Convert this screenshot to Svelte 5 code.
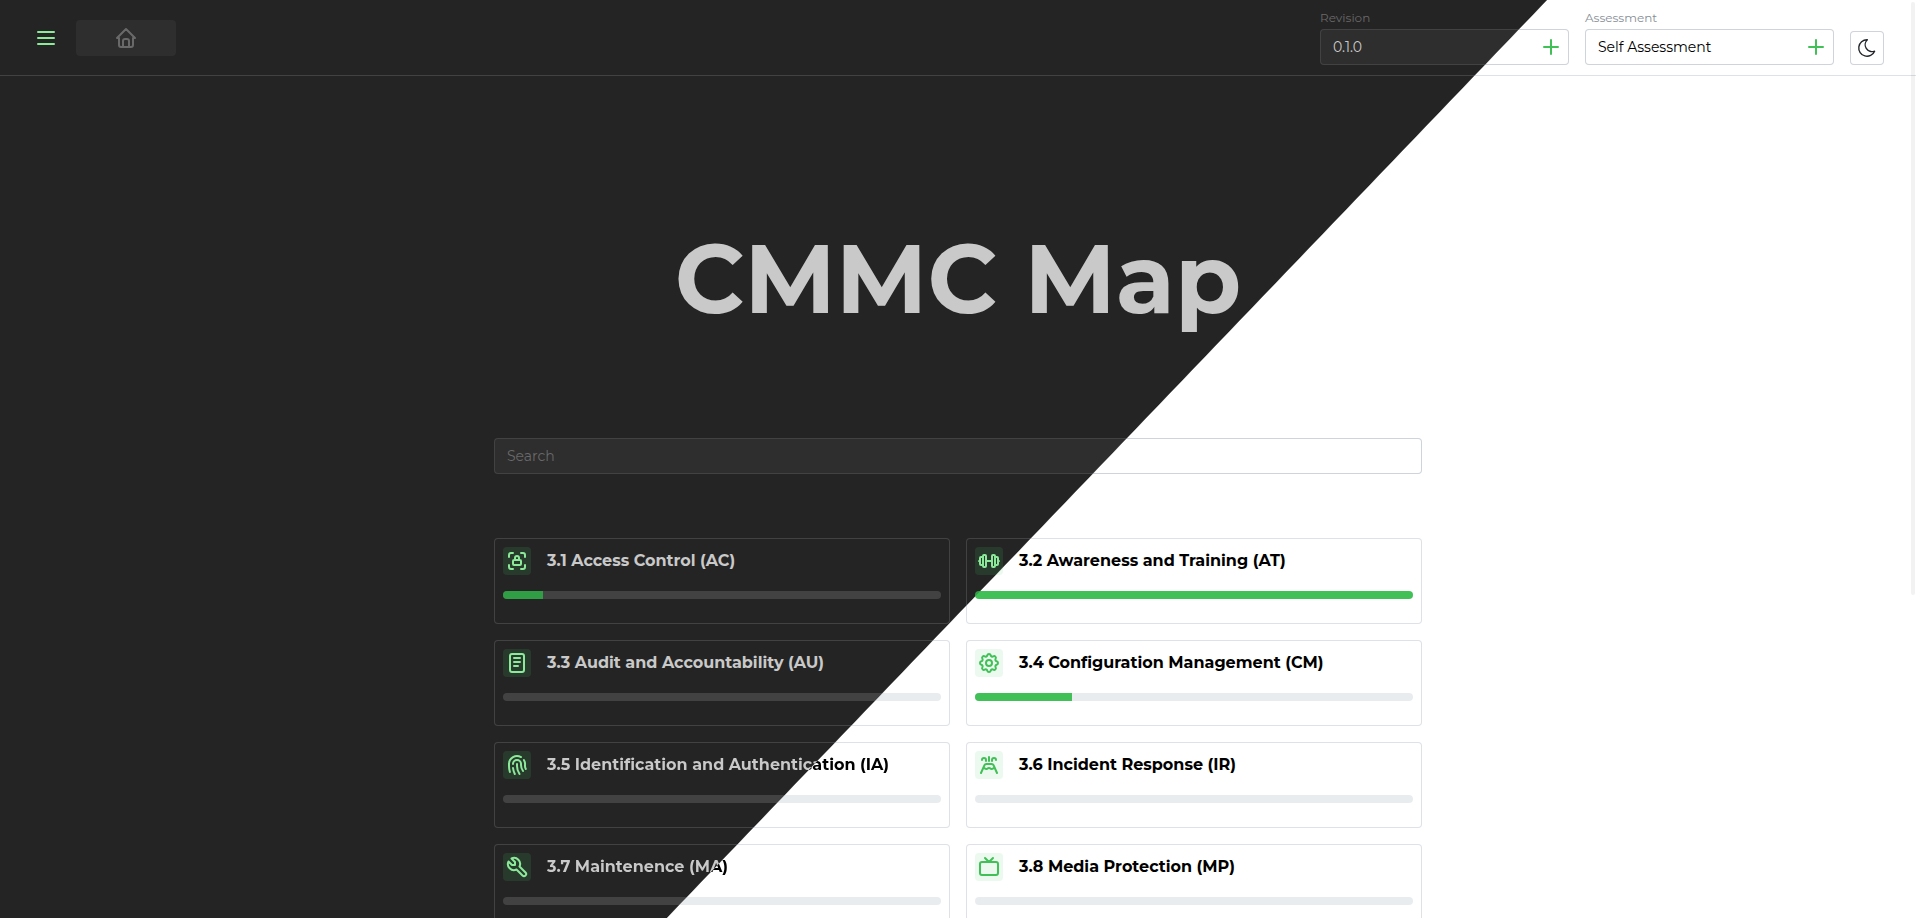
<script>
  const families = [
    {
      title: '3.1 Access Control (AC)', tone: 'dark', iconTone: 'dark', progress: 9.1,
      icon: 'M4 8v-2a2 2 0 0 1 2 -2h2M4 16v2a2 2 0 0 0 2 2h2M16 4h2a2 2 0 0 1 2 2v2M16 20h2a2 2 0 0 0 2 -2v-2M9 11h6a1 1 0 0 1 1 1v3a1 1 0 0 1 -1 1h-6a1 1 0 0 1 -1 -1v-3a1 1 0 0 1 1 -1zM10 11v-2a2 2 0 1 1 4 0v2'
    },
    {
      title: '3.2 Awareness and Training (AT)', tone: 'light', iconTone: 'dark', progress: 100,
      icon: 'M2 12h1M6 8h-2a1 1 0 0 0 -1 1v6a1 1 0 0 0 1 1h2M6 7v10a1 1 0 0 0 1 1h1a1 1 0 0 0 1 -1v-10a1 1 0 0 0 -1 -1h-1a1 1 0 0 0 -1 1zM9 12h6M15 7v10a1 1 0 0 0 1 1h1a1 1 0 0 0 1 -1v-10a1 1 0 0 0 -1 -1h-1a1 1 0 0 0 -1 1zM18 8h2a1 1 0 0 1 1 1v6a1 1 0 0 1 -1 1h-2M22 12h-1'
    },
    {
      title: '3.3 Audit and Accountability (AU)', tone: 'dark', iconTone: 'dark', progress: 0,
      icon: 'M7 3h10a2 2 0 0 1 2 2v14a2 2 0 0 1 -2 2h-10a2 2 0 0 1 -2 -2v-14a2 2 0 0 1 2 -2zM9 7h6M9 11h6M9 15h4'
    },
    {
      title: '3.4 Configuration Management (CM)', tone: 'light', iconTone: 'light', progress: 22.2,
      icon: 'M10.325 4.317c.426 -1.756 2.924 -1.756 3.35 0a1.724 1.724 0 0 0 2.573 1.066c1.543 -.94 3.31 .826 2.37 2.37a1.724 1.724 0 0 0 1.065 2.572c1.756 .426 1.756 2.924 0 3.35a1.724 1.724 0 0 0 -1.066 2.573c.94 1.543 -.826 3.31 -2.37 2.37a1.724 1.724 0 0 0 -2.572 1.065c-.426 1.756 -2.924 1.756 -3.35 0a1.724 1.724 0 0 0 -2.573 -1.066c-1.543 .94 -3.31 -.826 -2.37 -2.37a1.724 1.724 0 0 0 -1.065 -2.572c-1.756 -.426 -1.756 -2.924 0 -3.35a1.724 1.724 0 0 0 1.066 -2.573c-.94 -1.543 .826 -3.31 2.37 -2.37c1 .608 2.296 .07 2.572 -1.065zM9 12a3 3 0 1 0 6 0a3 3 0 0 0 -6 0'
    },
    {
      title: '3.5 Identification and Authentication (IA)', tone: 'split', iconTone: 'dark', progress: 0,
      icon: 'M18.9 7a8 8 0 0 1 1.1 5v1a6 6 0 0 0 .8 3M8 11a4 4 0 0 1 8 0v1a10 10 0 0 0 2 6M12 11v2a14 14 0 0 0 2.5 8M8 15a18 18 0 0 0 1.8 6M4.9 19a22 22 0 0 1 -.9 -7v-1a8 8 0 0 1 12 -6.95'
    },
    {
      title: '3.6 Incident Response (IR)', tone: 'light', iconTone: 'light', progress: 0,
      icon: 'M9 8v-1a2 2 0 1 0 -4 0M15 8v-1a2 2 0 1 1 4 0M4 20l3.472 -7.812a2 2 0 0 1 1.828 -1.188h5.4a2 2 0 0 1 1.828 1.188l3.472 7.812M6.192 15.064a2.14 2.14 0 0 1 .475 -.064c.527 -.009 1.026 .178 1.333 .5c.307 .32 .806 .507 1.333 .5c.527 .007 1.026 -.18 1.334 -.5c.307 -.322 .806 -.509 1.333 -.5c.527 -.009 1.026 .178 1.333 .5c.308 .32 .807 .507 1.334 .5c.527 .007 1.026 -.18 1.333 -.5c.307 -.322 .806 -.509 1.333 -.5c.161 .003 .32 .025 .472 .064M12 8v-4'
    },
    {
      title: '3.7 Maintenence (MA)', tone: 'split', iconTone: 'dark', progress: 0,
      icon: 'M7 10h3v-3l-3.5 -3.5a6 6 0 0 1 8 8l6 6a2 2 0 0 1 -3 3l-6 -6a6 6 0 0 1 -8 -8l3.5 3.5'
    },
    {
      title: '3.8 Media Protection (MP)', tone: 'light', iconTone: 'light', progress: 0,
      icon: 'M5 7h14a2 2 0 0 1 2 2v9a2 2 0 0 1 -2 2h-14a2 2 0 0 1 -2 -2v-9a2 2 0 0 1 2 -2zM16 3l-4 4l-4 -4'
    }
  ];

  const fields = [
    { id: 'revision', label: 'Revision', value: '0.1.0', tone: 'dark' },
    { id: 'assessment', label: 'Assessment', value: 'Self Assessment', tone: 'light' }
  ];
</script>

<div class="shell split">
  <header class="topbar">
    <div class="nav">
      <button class="burger" type="button" aria-label="Menu">
        <span></span><span></span><span></span>
      </button>
      <button class="home" type="button" aria-label="Home">
        <svg class="icon" viewBox="0 0 24 24" stroke-width="2">
          <path d="M5 12l-2 0l9 -9l9 9l-2 0M5 12v7a2 2 0 0 0 2 2h10a2 2 0 0 0 2 -2v-7M9 21v-6a2 2 0 0 1 2 -2h2a2 2 0 0 1 2 2v6" />
        </svg>
      </button>
    </div>

    <div class="tools">
      {#each fields as field}
        <div class="field {field.tone}">
          <label for={field.id}>{field.label}</label>
          <div class="control outlined">
            <input id={field.id} type="text" value={field.value} />
            <button class="add" type="button" aria-label="Add {field.label}">
              <svg class="icon" viewBox="0 0 24 24" stroke-width="2"><path d="M12 5v14M5 12h14" /></svg>
            </button>
          </div>
        </div>
      {/each}
      <button class="theme outlined" type="button" aria-label="Toggle theme">
        <svg class="icon moon" viewBox="0 0 24 24" stroke-width="1.5">
          <path d="M12 3c.132 0 .263 0 .393 0a7.5 7.5 0 0 0 7.92 12.446a9 9 0 1 1 -8.313 -12.454z" />
        </svg>
      </button>
    </div>
  </header>
  <div class="rule split"></div>

  <main>
    <h1>CMMC Map</h1>
    <input class="search outlined" type="search" placeholder="Search" aria-label="Search" />
    <div class="cards">
      {#each families as family}
        <a class="card outlined" href="#families">
          <div class="heading">
            <span class="badge split {family.iconTone}">
              <svg class="icon" viewBox="0 0 24 24" stroke-width="2"><path d={family.icon} /></svg>
            </span>
            <h2 class={family.tone}>{family.title}</h2>
          </div>
          <div class="track split" role="progressbar" aria-label={family.title} aria-valuenow={family.progress} aria-valuemin="0" aria-valuemax="100">
            <div class="fill split" style="width: {family.progress}%"></div>
          </div>
        </a>
      {/each}
    </div>
  </main>
  <div class="thumb"></div>
</div>

<style>
  :global(body) {
    margin: 0;
  }

  * {
    box-sizing: border-box;
  }

  /* Both themes share one diagonal edge, anchored to the window. */
  .split {
    background-image: linear-gradient(133.8deg, var(--dark) calc(50% + 107px), var(--light) calc(50% + 108px));
    background-attachment: fixed;
  }

  .outlined {
    --fill-dark: #2e2e2e;
    --line-dark: #424242;
    --line-light: #ced4da;
    border: 1px solid transparent;
    border-radius: 4px;
    background:
      linear-gradient(133.8deg, var(--fill-dark) calc(50% + 107px), #fff calc(50% + 108px)) fixed padding-box,
      linear-gradient(133.8deg, var(--line-dark) calc(50% + 107px), var(--line-light) calc(50% + 108px)) fixed border-box;
  }

  .shell {
    --dark: #242424;
    --light: #fff;
    position: relative;
    height: 100vh;
    overflow: hidden;
    font-family: Montserrat, Inter, sans-serif;
    font-size: 14px;
  }

  button {
    padding: 0;
    border: 0;
    font: inherit;
    cursor: pointer;
  }

  .icon {
    display: block;
    width: 24px;
    height: 24px;
    fill: none;
    stroke: currentColor;
    stroke-linecap: round;
    stroke-linejoin: round;
  }

  .topbar {
    display: flex;
    justify-content: space-between;
    padding: 10px 32px;
  }

  .nav {
    display: flex;
    align-items: center;
    gap: 16px;
  }

  .burger {
    display: flex;
    flex-direction: column;
    justify-content: center;
    gap: 4px;
    width: 28px;
    height: 28px;
    padding: 0 5px;
    background: none;
  }

  .burger span {
    height: 2px;
    border-radius: 1px;
    background: #8ce99a;
  }

  .home {
    display: grid;
    place-items: center;
    width: 100px;
    height: 36px;
    border-radius: 4px;
    background: #2e2e2e;
    color: #696969;
  }

  .tools {
    display: flex;
    align-items: flex-end;
    gap: 16px;
  }

  .field {
    width: 249px;
  }

  .field label {
    display: block;
    font-size: 12px;
    line-height: 16px;
    padding-bottom: 3px;
  }

  .field.dark label {
    color: #696969;
  }

  .field.light label {
    color: #868e96;
  }

  .control {
    display: flex;
    height: 36px;
  }

  .control input {
    flex: 1;
    min-width: 0;
    padding: 0 12px;
    border: 0;
    background: none;
    font: inherit;
    color: #000;
  }

  .field.dark input {
    color: #c9c9c9;
  }

  .add {
    display: grid;
    place-items: center;
    width: 34px;
    background: none;
    color: #40c057;
  }

  .theme {
    display: grid;
    place-items: center;
    width: 34px;
    height: 34px;
    color: #212529;
  }

  .moon {
    width: 22px;
    height: 22px;
  }

  .rule {
    --dark: #424242;
    --light: #dee2e6;
    height: 1px;
  }

  main {
    max-width: 960px;
    margin: 0 auto;
    padding: 143px 16px 0;
  }

  h1 {
    margin: 0 0 99px;
    font-size: 96px;
    line-height: 120px;
    font-weight: 700;
    text-align: center;
    color: #c9c9c9;
  }

  .search {
    display: block;
    width: 100%;
    height: 36px;
    margin-bottom: 64px;
    padding: 0 12px;
    font: inherit;
    color: #c9c9c9;
    appearance: none;
  }

  .search::placeholder {
    color: #696969;
  }

  .cards {
    display: grid;
    grid-template-columns: 1fr 1fr;
    gap: 16px;
  }

  .card {
    --fill-dark: #242424;
    --line-light: #dee2e6;
    padding: 8px 8px 24px;
    text-decoration: none;
  }

  .heading {
    display: flex;
    gap: 16px;
    margin-bottom: 16px;
  }

  .badge {
    --dark: #283a2c;
    --light: #ebf9ee;
    display: grid;
    place-items: center;
    width: 28px;
    height: 28px;
    border-radius: 4px;
  }

  .badge.dark {
    color: #8ce99a;
  }

  .badge.light {
    color: #40c057;
  }

  h2 {
    margin: 0;
    font-size: 16px;
    line-height: 28px;
    font-weight: 700;
  }

  h2.dark {
    color: #c9c9c9;
  }

  h2.light {
    color: #000;
  }

  h2.split {
    --dark: #c9c9c9;
    --light: #000;
    background-clip: text;
    color: transparent;
  }

  .track {
    --dark: #424242;
    --light: #e9ecef;
    height: 8px;
    border-radius: 4px;
    overflow: hidden;
  }

  .fill {
    --dark: #2f9e44;
    --light: #40c057;
    height: 100%;
  }

  .thumb {
    position: absolute;
    top: 2px;
    right: 1px;
    width: 4px;
    height: calc(65% - 4px);
    border-radius: 2px;
    background: rgba(0, 0, 0, 0.05);
  }
</style>
